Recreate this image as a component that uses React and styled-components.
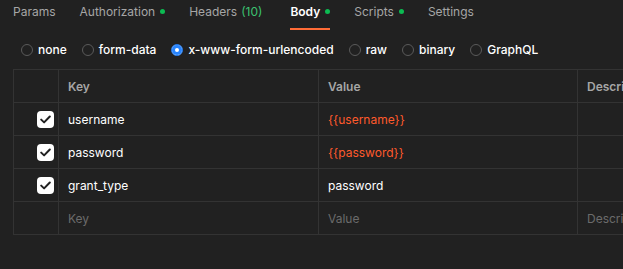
import React from "react";
import styled, { createGlobalStyle } from "styled-components";

const Global = createGlobalStyle`
  html, body { margin: 0; padding: 0; background: #212121; }
  body { font-family: Inter, "Noto Sans", sans-serif; -webkit-font-smoothing: antialiased; }
  * { box-sizing: border-box; }
`;

const Page = styled.div`
  width: 623px;
  height: 269px;
  background: #212121;
  overflow: hidden;
  color: #ffffff;
  font-size: 12px;
`;

const TabBar = styled.div`
  display: flex;
  align-items: stretch;
  gap: 24px;
  padding: 0 13px;
  height: 30px;
  font-size: 12px;
`;

const Tab = styled.div`
  display: flex;
  align-items: center;
  gap: 5px;
  padding-bottom: 5px;
  margin-right: ${(p) => (p.$extra ? "4px" : "0")};
  color: ${(p) => (p.$active ? "#ffffff" : "#a6a6a6")};
  font-weight: ${(p) => (p.$active ? 600 : 400)};
  border-bottom: 2px solid ${(p) => (p.$active ? "#ff6c37" : "transparent")};
  white-space: nowrap;
`;

const Label = styled.span`
  display: inline-flex;
  gap: 4px;
`;

const Dot = styled.span`
  width: 5px;
  height: 5px;
  border-radius: 50%;
  background: #0cbb52;
  display: inline-block;
`;

const Count = styled.span`
  color: #3cc270;
`;

const RadioRow = styled.div`
  display: flex;
  align-items: center;
  gap: 15px;
  padding: 0 21px;
  height: 39px;
`;

const RadioItem = styled.label`
  display: flex;
  align-items: center;
  gap: 5px;
  color: #ffffff;
  font-weight: 450;
  white-space: nowrap;
`;

const Radio = styled.span`
  width: 12px;
  height: 12px;
  border-radius: 50%;
  border: 1px solid ${(p) => (p.$checked ? "#1a73e8" : "#5a5a5a")};
  background: ${(p) => (p.$checked ? "#ffffff" : "transparent")};
  box-shadow: ${(p) => (p.$checked ? "inset 0 0 0 3px #2684ff" : "none")};
  display: inline-block;
  flex: none;
`;

const Table = styled.div`
  margin-left: 13px;
  width: 640px;
  border-top: 1px solid #333333;
  border-left: 1px solid #333333;
`;

const Row = styled.div`
  display: grid;
  grid-template-columns: 45px 260px 259px 1fr;
  height: 33px;
`;

const Cell = styled.div`
  border-right: 1px solid #333333;
  border-bottom: 1px solid #333333;
  display: flex;
  align-items: center;
  padding: 0 9px;
  font-size: 12px;
  color: ${(p) =>
    p.$tone === "head"
      ? "#a6a6a6"
      : p.$tone === "var"
      ? "#ff5a2c"
      : p.$tone === "ph"
      ? "#6b6b6b"
      : "#ffffff"};
  font-weight: ${(p) => (p.$tone === "head" ? 600 : 400)};
  white-space: nowrap;
  overflow: hidden;
`;

const CheckCell = styled(Cell)`
  justify-content: flex-end;
  padding: 0 4px 0 0;
`;

const Check = styled.span`
  width: 17px;
  height: 17px;
  border-radius: 4px;
  background: #ffffff;
  display: flex;
  align-items: center;
  justify-content: center;
`;

const tabs = [
  { label: "Params" },
  { label: "Authorization", dot: true },
  { label: "Headers", count: "(10)", extra: true },
  { label: "Body", dot: true, active: true },
  { label: "Scripts", dot: true },
  { label: "Settings" },
];

const radios = ["none", "form-data", "x-www-form-urlencoded", "raw", "binary", "GraphQL"];

const rows = [
  { key: "username", value: "{{username}}", isVar: true },
  { key: "password", value: "{{password}}", isVar: true },
  { key: "grant_type", value: "password" },
];

const CheckIcon = () => (
  <svg width="11" height="9" viewBox="0 0 11 9">
    <path d="M1.2 4.6 L4.1 7.4 L9.8 1.5" fill="none" stroke="#212121" strokeWidth="2" strokeLinecap="round" strokeLinejoin="round" />
  </svg>
);

export default function App() {
  return (
    <Page>
      <Global />
      <TabBar>
        {tabs.map((t) => (
          <Tab key={t.label} $active={t.active} $extra={t.extra}>
            <Label>
              {t.label}
              {t.count && <Count>{t.count}</Count>}
            </Label>
            {t.dot && <Dot />}
          </Tab>
        ))}
      </TabBar>
      <RadioRow>
        {radios.map((r) => (
          <RadioItem key={r}>
            <Radio $checked={r === "x-www-form-urlencoded"} />
            {r}
          </RadioItem>
        ))}
      </RadioRow>
      <Table>
        <Row>
          <Cell />
          <Cell $tone="head">Key</Cell>
          <Cell $tone="head">Value</Cell>
          <Cell $tone="head">Description</Cell>
        </Row>
        {rows.map((r) => (
          <Row key={r.key}>
            <CheckCell>
              <Check>
                <CheckIcon />
              </Check>
            </CheckCell>
            <Cell>{r.key}</Cell>
            <Cell $tone={r.isVar ? "var" : undefined}>{r.value}</Cell>
            <Cell />
          </Row>
        ))}
        <Row>
          <Cell />
          <Cell $tone="ph">Key</Cell>
          <Cell $tone="ph">Value</Cell>
          <Cell $tone="ph">Description</Cell>
        </Row>
      </Table>
    </Page>
  );
}
